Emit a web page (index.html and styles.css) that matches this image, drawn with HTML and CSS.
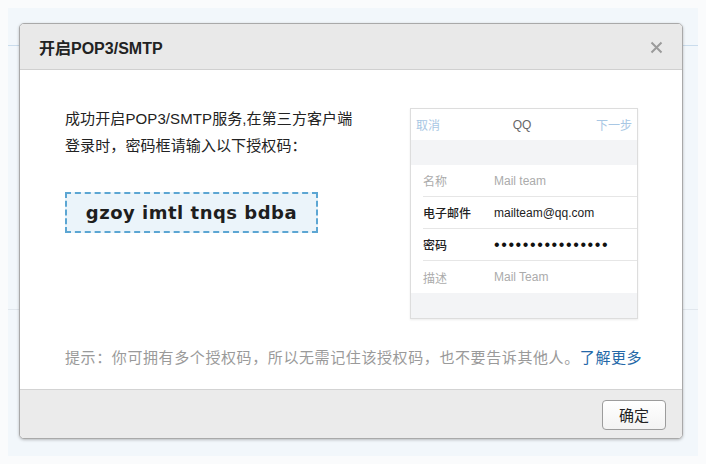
FILE: index.html
```html
<!DOCTYPE html>
<html lang="zh-CN">
<head>
    <meta charset="UTF-8">
    <meta name="viewport" content="width=device-width, initial-scale=1.0">
    <title>开启POP3/SMTP</title>
    <link rel="stylesheet" href="styles.css">
</head>
<body>
<div class="backdrop">
    <div class="bg-head"></div>
    <div class="bg-row"></div>

    <div class="dialog">
        <div class="dialog-header">
            <h2>开启POP3/SMTP</h2>
            <span class="close">
                <svg width="13" height="13" viewBox="0 0 13 13">
                    <path d="M1.5 1.5 L11.5 11.5 M11.5 1.5 L1.5 11.5" stroke="#9b9b9b" stroke-width="2" fill="none"/>
                </svg>
            </span>
        </div>

        <div class="dialog-body">
            <div class="content">
                <div class="intro">
                    <p>成功开启POP3/SMTP服务,在第三方客户端<br>登录时，密码框请输入以下授权码：</p>
                    <div class="auth-code">gzoy imtl tnqs bdba</div>
                </div>

                <div class="phone">
                    <div class="phone-nav">
                        <span class="nav-link">取消</span>
                        <span class="nav-title">QQ</span>
                        <span class="nav-link">下一步</span>
                    </div>
                    <div class="phone-gap"></div>
                    <div class="phone-row muted">
                        <span class="label">名称</span>
                        <span class="value">Mail team</span>
                    </div>
                    <div class="phone-row">
                        <span class="label">电子邮件</span>
                        <span class="value">mailteam@qq.com</span>
                    </div>
                    <div class="phone-row">
                        <span class="label">密码</span>
                        <span class="value dots">••••••••••••••••</span>
                    </div>
                    <div class="phone-row muted">
                        <span class="label">描述</span>
                        <span class="value">Mail Team</span>
                    </div>
                    <div class="phone-gap"></div>
                </div>
            </div>

            <p class="tip">提示：你可拥有多个授权码，所以无需记住该授权码，也不要告诉其他人。<a href="#">了解更多</a></p>
        </div>

        <div class="dialog-footer">
            <button>确定</button>
        </div>
    </div>
</div>
</body>
</html>
```

FILE: styles.css
```css
body {
    font-family: 'Liberation Sans', 'Noto Sans CJK SC', sans-serif;
    background-color: #FAFBFC;
    color: #222222;
    margin: 0;
    padding: 8px;
}

.backdrop {
    position: relative;
    width: 690px;
    height: 448px;
    background-color: #F2F7FB;
}

.bg-head {
    height: 37px;
    border-bottom: 1px solid #CADCEC;
}

.bg-row {
    height: 263px;
    border-bottom: 1px solid #E1E7ED;
}

/* modal on top of the page */
.dialog {
    position: absolute;
    left: 11px;
    top: 15px;
    width: 664px;
    height: 416px;
    box-sizing: border-box;
    border: 1px solid #A9A9A9;
    border-radius: 5px;
    background-color: #FFFFFF;
    box-shadow: 0 1px 3px rgba(0, 0, 0, 0.25);
    overflow: hidden;
    display: flex;
    flex-direction: column;
}

.dialog-header {
    height: 46px;
    box-sizing: border-box;
    background-color: #E9E9E9;
    border-bottom: 1px solid #D0D0D0;
    display: flex;
    align-items: center;
    justify-content: space-between;
    padding: 0 19px 0 19px;
}

.dialog-header h2 {
    margin: 0;
    font-size: 16px;
    font-weight: bold;
    color: #222222;
}

.close {
    display: flex;
    margin-top: 1px;
}

.dialog-body {
    height: 319px;
    box-sizing: border-box;
    padding: 35px 44px 0 45px;
}

.content {
    display: flex;
    justify-content: space-between;
}

.intro p {
    margin: 0;
    font-size: 15px;
    line-height: 27px;
    letter-spacing: 0.1px;
    color: #222222;
}

.auth-code {
    margin-top: 33px;
    width: 253px;
    height: 41px;
    box-sizing: border-box;
    border: 2px dashed #5CA6D3;
    background-color: #EBF4FA;
    display: flex;
    align-items: center;
    justify-content: center;
    font-family: 'DejaVu Sans', sans-serif;
    font-size: 18px;
    font-weight: bold;
    letter-spacing: 0.5px;
    color: #1E1E1E;
}

.phone {
    margin-top: 3px;
    width: 228px;
    box-sizing: border-box;
    border: 1px solid #DDDDDD;
    box-shadow: 0 1px 2px rgba(0, 0, 0, 0.08);
    font-size: 12px;
}

.phone-nav {
    height: 31px;
    display: flex;
    align-items: center;
    justify-content: space-between;
    padding: 0 5px 0 5px;
    background-color: #FFFFFF;
}

.nav-link {
    color: #A8C7E4;
}

.nav-title {
    color: #666666;
    margin-left: 8px;
}

.phone-gap {
    height: 25px;
    background-color: #F3F4F6;
}

.phone-row {
    height: 32px;
    margin-left: 12px;
    display: flex;
    align-items: center;
    border-bottom: 1px solid #E6E6E6;
    box-sizing: border-box;
    color: #222222;
}

.phone-row:nth-child(6) {
    border-bottom: none;
}

.phone-row .label {
    width: 71px;
    font-weight: 500;
}

.phone-row.muted {
    color: #ABABAB;
}

.phone-row.muted .label {
    font-weight: normal;
}

.dots {
    font-size: 16px;
    letter-spacing: 1.6px;
    color: #111111;
}

.tip {
    margin: 29px 0 0 0;
    font-size: 15px;
    line-height: 20px;
    letter-spacing: 0.6px;
    color: #9A9A9A;
    white-space: nowrap;
}

.tip a {
    color: #2468A8;
    text-decoration: none;
}

.dialog-footer {
    height: 49px;
    box-sizing: border-box;
    border-top: 1px solid #D3D3D3;
    background-color: #EBEBEB;
    display: flex;
    align-items: center;
    justify-content: flex-end;
    padding: 0 16px 0 0;
}

.dialog-footer button {
    width: 64px;
    height: 30px;
    margin-top: 1px;
    border: 1px solid #9C9C9C;
    border-radius: 4px;
    background: linear-gradient(#FFFFFF, #F3F3F3);
    font-family: 'Noto Sans CJK SC', sans-serif;
    font-size: 15px;
    color: #222222;
    cursor: pointer;
}
```
